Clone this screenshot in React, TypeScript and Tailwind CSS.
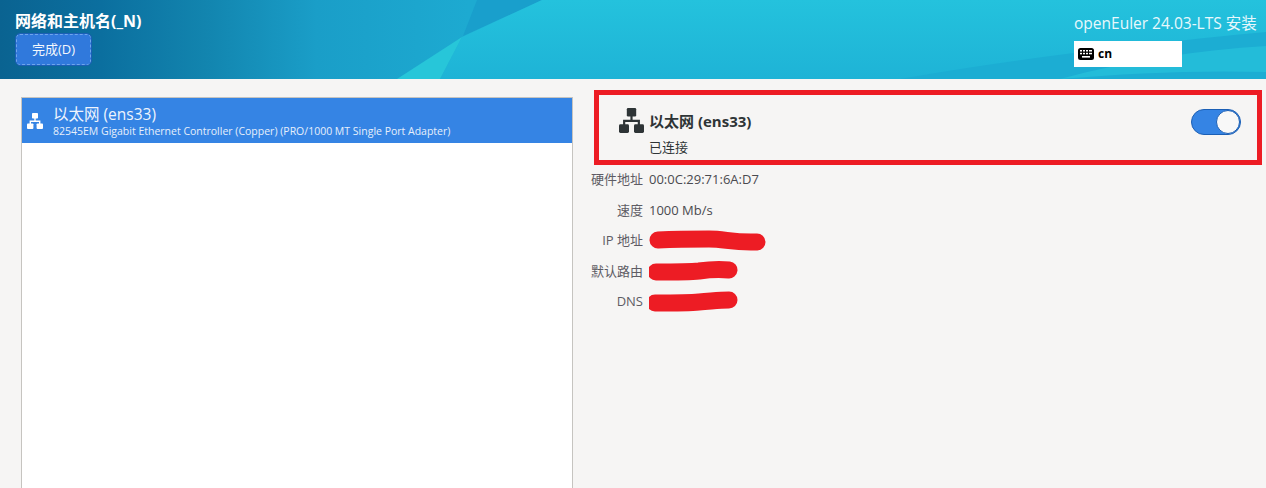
const font = { fontFamily: '"Open Sans", "Noto Sans CJK SC", sans-serif' }

function NetworkIcon({ className }: { className: string }) {
  return (
    <svg viewBox="0 0 16 16" className={className} fill="currentColor">
      <rect x="5" y="0" width="6" height="5.5" rx="0.8" />
      <rect x="7.3" y="5" width="1.4" height="3" />
      <path d="M2.6 7.5h10.8v3.5h-1.4V9H4v2H2.6z" />
      <rect x="0" y="10.4" width="6.4" height="5.6" rx="0.9" />
      <rect x="9.6" y="10.4" width="6.4" height="5.6" rx="0.9" />
    </svg>
  )
}

function KeyboardIcon() {
  return (
    <svg viewBox="0 0 16 12" className="w-[16px] h-[12px]">
      <rect width="16" height="12" rx="2.5" fill="#000" />
      <g fill="#fff">
        <rect x="2" y="2" width="2" height="1.5" />
        <rect x="5" y="2" width="2" height="1.5" />
        <rect x="8" y="2" width="2" height="1.5" />
        <rect x="11" y="2" width="3" height="1.5" />
        <rect x="2" y="4.8" width="2" height="1.5" />
        <rect x="5" y="4.8" width="2" height="1.5" />
        <rect x="8" y="4.8" width="2" height="1.5" />
        <rect x="11" y="4.8" width="3" height="1.5" />
        <rect x="4" y="8" width="8" height="1.6" />
      </g>
    </svg>
  )
}

function Scribble({ width, d }: { width: number; d: string }) {
  return (
    <svg viewBox={`0 0 ${width} 24`} width={width} height={24} className="block" fill="none">
      <path d={d} stroke="#ed1c24" strokeWidth="17" strokeLinecap="round" strokeLinejoin="round" />
    </svg>
  )
}

function HeaderArt() {
  return (
    <svg viewBox="0 0 1266 79" preserveAspectRatio="none" className="absolute inset-0 w-full h-full">
      <defs>
        <linearGradient id="base" x1="0" y1="0" x2="1" y2="0">
          <stop offset="0" stopColor="#0a6391" />
          <stop offset="0.08" stopColor="#0b6f9f" />
          <stop offset="0.16" stopColor="#1284ae" />
          <stop offset="0.25" stopColor="#1a9ec8" />
          <stop offset="0.37" stopColor="#1daad1" />
          <stop offset="1" stopColor="#1daad1" />
        </linearGradient>
        <linearGradient id="sweep" x1="0" y1="0" x2="0" y2="1">
          <stop offset="0" stopColor="#24c2dd" />
          <stop offset="1" stopColor="#1eb3d6" />
        </linearGradient>
      </defs>
      <rect width="1266" height="79" fill="url(#base)" />
      <path d="M477 0H542L463 36Z" fill="#199fcc" />
      <path d="M542 0H1266V79H440L462 37Z" fill="url(#sweep)" />
      <path d="M397 79L462 37L440 79Z" fill="#27c6d9" />
      <path d="M900 79C1020 58 1140 44 1266 32V79Z" fill="#1cadd3" />
      <path d="M1060 79C1130 60 1200 50 1266 46V72C1200 70 1130 73 1060 79Z" fill="#23bcd9" />
    </svg>
  )
}

function InfoRow({ label, children }: { label: string; children: React.ReactNode }) {
  return (
    <div className="flex items-center h-[30.5px]">
      <div className="w-[52px] text-right text-[13px] text-[#5e5c64] whitespace-nowrap">{label}</div>
      <div className="ml-[6px] text-[13px] text-[#4a4a4f] whitespace-nowrap">{children}</div>
    </div>
  )
}

export default function App() {
  return (
    <div className="w-[1266px] h-[488px] overflow-hidden bg-[#f6f5f4] flex flex-col" style={font}>
      <header className="relative h-[79px] shrink-0 text-white">
        <HeaderArt />
        <div className="relative flex justify-between h-full">
          <div className="pl-[15px] pt-[11px]">
            <div className="text-[16px] leading-[20px] font-bold whitespace-nowrap">网络和主机名(_N)</div>
            <button className="mt-[3px] ml-[1px] w-[75px] h-[31px] rounded-[4px] bg-[#3079dc] border border-dashed border-[#6ea5ec] outline outline-1 outline-[#1b5fb5] text-[13px] text-[#f4f8fd]">
              完成(D)
            </button>
          </div>
          <div className="w-[192px] pt-[13px]">
            <div className="text-[15.5px] leading-[20px] text-[#e8f8fc] whitespace-nowrap">openEuler 24.03-LTS 安装</div>
            <div className="mt-[8px] w-[108px] h-[26px] bg-white flex items-center pl-[4px] gap-[4px] text-black">
              <KeyboardIcon />
              <span className="text-[12px] font-bold">cn</span>
            </div>
          </div>
        </div>
      </header>

      <main className="flex-1 flex min-h-0">
        <section className="ml-[21px] mt-[18px] w-[552px] border border-b-0 border-[#c6c4c0] bg-white">
          <div className="h-[45px] bg-[#3584e4] text-white flex items-center pl-[5px]">
            <NetworkIcon className="w-[16px] h-[16px] shrink-0" />
            <div className="ml-[10px]">
              <div className="text-[15.5px] leading-[20px] text-[#eef4fd] whitespace-nowrap">以太网 (ens33)</div>
              <div className="text-[10.5px] leading-[14px] text-[#e6effb] whitespace-nowrap">
                82545EM Gigabit Ethernet Controller (Copper) (PRO/1000 MT Single Port Adapter)
              </div>
            </div>
          </div>
        </section>

        <section className="ml-[18px] mt-[11px] w-[672px]">
          <div className="w-[668px] ml-[3px] h-[75px] border-[5px] border-[#ed1c24] flex items-start pl-[20px] pr-[15px]">
            <div className="flex-1 pt-[13px]">
              <div className="flex items-center">
                <NetworkIcon className="w-[25px] h-[25px] text-[#2e3436]" />
                <span className="ml-[5px] mt-[2px] text-[15px] font-bold text-[#2e3436] whitespace-nowrap">以太网 (ens33)</span>
              </div>
              <div className="ml-[30px] mt-[5px] text-[13px] leading-[18px] text-[#2e3436]">已连接</div>
            </div>
            <div className="mt-[14px] mr-[1px] w-[50px] h-[26px] rounded-full bg-[#3584e4] border border-[#1b5fb5] flex justify-end">
              <div className="w-[24px] h-[24px] rounded-full bg-[#f8f8f8] border border-[#1b5fb5]" />
            </div>
          </div>
          <div className="mt-[-0.5px]">
            <InfoRow label="硬件地址">00:0C:29:71:6A:D7</InfoRow>
            <InfoRow label="速度">1000 Mb/s</InfoRow>
            <InfoRow label="IP 地址">
              <Scribble width={118} d="M9 11C30 10 50 10 60 10C76 10 84 14 108 13" />
            </InfoRow>
            <InfoRow label="默认路由">
              <Scribble width={90} d="M7 13C24 13 40 13 50 12C64 10 70 10 80 11" />
            </InfoRow>
            <InfoRow label="DNS">
              <Scribble width={90} d="M6 13C24 13 40 13 50 12C64 11 70 10 80 10" />
            </InfoRow>
          </div>
        </section>
      </main>
    </div>
  )
}
